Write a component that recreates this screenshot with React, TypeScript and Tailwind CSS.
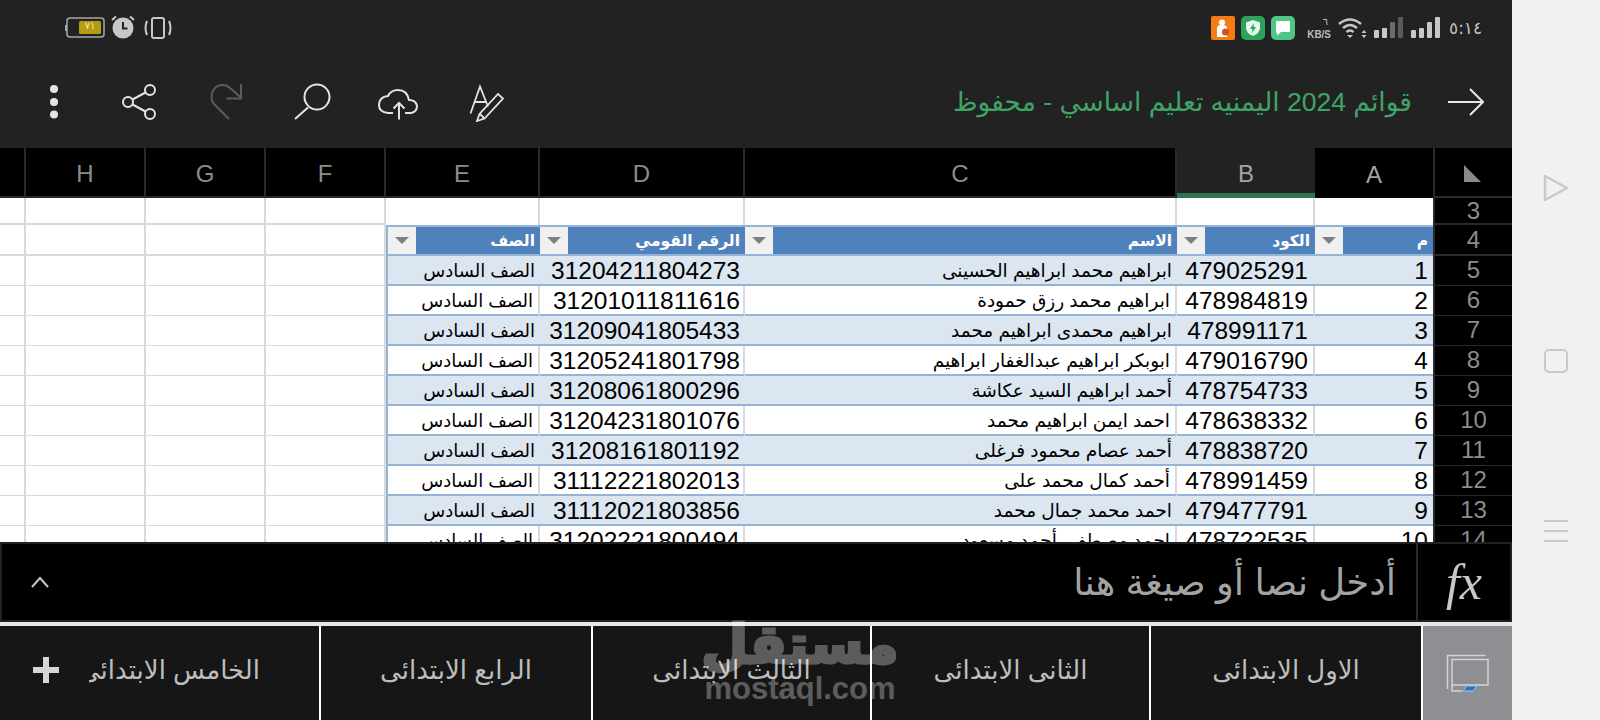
const rows = [
  { no: "1", code: "479025291", name: "ابراهيم محمد ابراهيم الحسينى", id: "31204211804273" },
  { no: "2", code: "478984819", name: "ابراهيم محمد رزق حمودة", id: "31201011811616" },
  { no: "3", code: "478991171", name: "ابراهيم محمدى ابراهيم محمد", id: "31209041805433" },
  { no: "4", code: "479016790", name: "ابوبكر ابراهيم عبدالغفار ابراهيم", id: "31205241801798" },
  { no: "5", code: "478754733", name: "أحمد ابراهيم السيد عكاشة", id: "31208061800296" },
  { no: "6", code: "478638332", name: "احمد ايمن ابراهيم محمد", id: "31204231801076" },
  { no: "7", code: "478838720", name: "أحمد عصام محمود فرغلى", id: "31208161801192" },
  { no: "8", code: "478991459", name: "أحمد كمال محمد على", id: "31112221802013" },
  { no: "9", code: "479477791", name: "احمد محمد جمال محمد", id: "31112021803856" },
  { no: "10", code: "478722535", name: "احمد مصطفى أحمد مسعود", id: "31202221800494" },
];

const gridCols = "grid grid-cols-[26px_120px_120px_120px_154px_205px_432px_138px_118px_79px] leading-none";
const emptyCell = "border-r-2 border-b-2 border-[#d9d9d9] bg-white";
const rowHead = "flex items-center justify-center border-b-2 border-l-2 border-[#2a2a2a] bg-black text-[24px] text-[#8c8c8c]";

function EmptyCells() {
  return (
    <>
      <div className={emptyCell} />
      <div className={emptyCell} />
      <div className={emptyCell} />
      <div className={emptyCell} />
    </>
  );
}

function HeaderCell({ label, pad }: { label: string; pad: string }) {
  return (
    <div className={`flex items-center border-y-2 border-[#95b3d7] bg-[#4f81bd] ${pad}`}>
      <div className="flex h-full w-[28px] shrink-0 items-center justify-center bg-[#f0f0f0]">
        <div className="h-0 w-0 border-x-[7px] border-t-[7px] border-x-transparent border-t-[#7f7f7f]" />
      </div>
      <div dir="rtl" className="flex-1 pr-[5px] text-right text-[15.5px] leading-none font-bold whitespace-nowrap text-white">
        {label}
      </div>
    </div>
  );
}

function StatusBar() {
  return (
    <div className="flex h-[56px] items-center pr-[30px] pl-[65px] text-[#c4c4c4]">
      <svg width="108" height="28" viewBox="65 14 108 28" className="shrink-0">
        <rect x="67" y="18" width="37" height="19" rx="3" fill="none" stroke="#a8a8a8" strokeWidth="1.5" />
        <rect x="65" y="25" width="2" height="6" fill="#a8a8a8" />
        <rect x="79" y="21" width="22" height="13" rx="1.5" fill="#b59c13" />
        <circle cx="123" cy="28" r="10.5" fill="#c8c8c8" />
        <path d="M123 22v6.5h4.5" fill="none" stroke="#222" strokeWidth="2" />
        <path d="M112 20l4-3.5M134 20l-4-3.5" stroke="#c8c8c8" strokeWidth="2" />
        <rect x="152" y="18" width="12" height="20" rx="2" fill="none" stroke="#c8c8c8" strokeWidth="2" />
        <path d="M147 21q-3 7 0 14M169 21q3 7 0 14" fill="none" stroke="#c8c8c8" strokeWidth="2" />
      </svg>
      <span className="absolute left-[79px] top-[19px] w-[22px] text-center font-['DejaVu_Sans',sans-serif] text-[10px] leading-[13px] text-[#f4e9a8]">٧١</span>
      <div className="ml-auto flex items-center">
        <div className="flex h-[24px] w-[24px] items-center justify-center rounded-[2px] bg-[#f57c14]">
          <svg width="16" height="20" viewBox="0 0 16 20">
            <circle cx="7" cy="4.5" r="3" fill="#fff" />
            <path d="M2 19V10q0-3 5-3t5 3v9z" fill="#fff" />
            <circle cx="10.5" cy="14" r="3.5" fill="#c9561a" />
          </svg>
        </div>
        <div className="ml-[6px] flex h-[24px] w-[24px] items-center justify-center rounded-[5px] bg-[#2fa25a]">
          <svg width="16" height="18" viewBox="0 0 16 18">
            <path d="M8 1l7 2.5V9q0 5-7 8-7-3-7-8V3.5z" fill="#e6f6ec" />
            <path d="M9 4L5 10h2.5L7 14l4-6H8.5z" fill="#2fa25a" />
          </svg>
        </div>
        <div className="ml-[6px] flex h-[24px] w-[24px] items-center justify-center rounded-[5px] bg-[#4fc683]">
          <svg width="16" height="16" viewBox="0 0 16 16">
            <path d="M2 1h12q1 0 1 1v9q0 1-1 1H6l-4 3.5V13H2q-1 0-1-1V2q0-1 1-1z" fill="#fff" />
          </svg>
        </div>
        <div className="ml-[9px] flex w-[28px] flex-col items-end font-['Liberation_Sans',sans-serif] text-[11px] leading-none font-bold text-[#bdbdbd]">
          <span className="mr-[4px] font-['DejaVu_Sans',sans-serif] text-[10px] font-normal">٦</span>
          <span className="mt-[2px] scale-x-90 whitespace-nowrap">KB/S</span>
        </div>
        <svg width="30" height="22" viewBox="0 0 30 22" className="ml-[5px]">
          <path d="M2 7q11-9 22 0M6 11q7-6 14 0M9.5 15q3.5-3 7 0" fill="none" stroke="#c8c8c8" strokeWidth="2.4" />
          <path d="M13 21l-3-3h6z" fill="#c8c8c8" />
          <path d="M27 13l-2.500 3h5zM27 21l-2.500-3h5z" fill="#c8c8c8" />
        </svg>
        <svg width="29" height="26" viewBox="0 0 29 26" className="ml-[7px]">
          <rect x="0" y="15" width="5" height="8" rx="1" fill="#c8c8c8" />
          <rect x="8" y="13" width="5" height="10" rx="1" fill="#c8c8c8" />
          <rect x="16" y="7" width="5" height="16" rx="1" fill="#6b6b6b" />
          <rect x="24" y="2" width="5" height="21" rx="1" fill="#5a5a5a" />
        </svg>
        <svg width="29" height="26" viewBox="0 0 29 26" className="ml-[8px]">
          <rect x="0" y="15" width="5" height="8" rx="1" fill="#c8c8c8" />
          <rect x="8" y="13" width="5" height="10" rx="1" fill="#c8c8c8" />
          <rect x="16" y="7" width="5" height="16" rx="1" fill="#c8c8c8" />
          <rect x="24" y="2" width="5" height="21" rx="1" fill="#c8c8c8" />
        </svg>
        <span className="ml-[9px] w-[33px] text-center font-['DejaVu_Sans',sans-serif] text-[17px] leading-none text-[#c4c4c4]">٥:١٤</span>
      </div>
    </div>
  );
}

function Toolbar() {
  return (
    <div className="flex h-[92px] items-center pr-[28px] pl-[48px]">
      <svg width="12" height="40" viewBox="48 82 12 40" className="shrink-0">
        <circle cx="54" cy="89" r="4" fill="#e4e4e4" />
        <circle cx="54" cy="102" r="4" fill="#e4e4e4" />
        <circle cx="54" cy="114.500" r="4" fill="#e4e4e4" />
      </svg>
      <svg width="38" height="40" viewBox="120 82 38 40" className="ml-[60px] shrink-0" fill="none" stroke="#e4e4e4" strokeWidth="2">
        <circle cx="150" cy="90" r="5" />
        <circle cx="128" cy="102" r="5" />
        <circle cx="150" cy="114" r="5" />
        <path d="M132.500 99.500l13-7M132.500 104.500l13 7" />
      </svg>
      <svg width="37" height="40" viewBox="208 82 37 40" className="ml-[50px] shrink-0" fill="none" stroke="#5c5c5c" strokeWidth="2">
        <path d="M229 119l-15-15q-4-5-1.500-12 3-7 9.500-7 5 0 8 3l11 9.500" />
        <path d="M241 84v14.500h-14.500" />
      </svg>
      <svg width="39" height="40" viewBox="293 82 39 40" className="ml-[48px] shrink-0" fill="none" stroke="#e4e4e4" strokeWidth="2">
        <circle cx="317" cy="97" r="12.500" />
        <path d="M308 107.500l-13 11.500" />
      </svg>
      <svg width="44" height="40" viewBox="376 82 44 40" className="ml-[44px] shrink-0" fill="none" stroke="#e4e4e4" strokeWidth="2">
        <path d="M393 113h-5q-9-1-9-8 0-8 9-9 3-6 10-6 9 0 11 10 7 0 8 6 0 6-6 7h-6" />
        <path d="M399 119.500v-16M393.500 108.500l5.500-5.500 5.500 5.500" />
      </svg>
      <svg width="38" height="40" viewBox="468 82 38 40" className="ml-[48px] shrink-0" fill="none" stroke="#e4e4e4" strokeWidth="1.800">
        <path d="M470.500 113.500l9.500-27 8 20M475 102h11" />
        <path d="M477 121l2.500-7 18.500-20 5 4.500-18.500 20z" />
        <path d="M480 114l4 4" />
      </svg>
      <div dir="rtl" className="ml-auto whitespace-nowrap font-['Liberation_Sans','DejaVu_Sans',sans-serif] text-[26.500px] leading-none text-[#3fa566]">
        قوائم 2024 اليمنيه تعليم اساسي - محفوظ
      </div>
      <svg width="36" height="28" viewBox="0 0 36 28" className="ml-[36px] shrink-0" fill="none" stroke="#e8e8e8" strokeWidth="2">
        <path d="M0 14h35M22 1l13 13-13 13" />
      </svg>
    </div>
  );
}

function ColumnHeaders() {
  const labels = ["", "H", "G", "F", "E", "D", "C"];
  return (
    <div className={`${gridCols} h-[50px] bg-black text-[24px] text-[#8c8c8c]`}>
      {labels.map((label) => (
        <div key={label} className="flex items-center justify-center border-r-2 border-b-[2px] border-[#2a2a2a] pt-[4px]">
          {label}
        </div>
      ))}
      <div className="flex items-center justify-center border-b-[5px] border-[#2e7450] bg-[#222222] pt-[6px] text-[#a3a3a3]">B</div>
      <div className="flex items-center justify-center pt-[4px] text-[#a3a3a3]">A</div>
      <div className="flex items-center justify-center border-b-2 border-l-2 border-[#2a2a2a]">
        <div className="mt-[2px] ml-[-2px] h-0 w-0 border-r-[17px] border-b-[17px] border-r-transparent border-b-[#8a8a8a]" />
      </div>
    </div>
  );
}

function Sheet() {
  return (
    <div className="h-[344px] overflow-hidden">
      <div className={`${gridCols} h-[27px]`}>
        <EmptyCells />
        <div className="border-r-2 border-[#d9d9d9] bg-white" />
        <div className="border-r-2 border-[#d9d9d9] bg-white" />
        <div className="border-r-2 border-[#d9d9d9] bg-white" />
        <div className="border-r-2 border-[#d9d9d9] bg-white" />
        <div className="bg-white" />
        <div className={rowHead}>3</div>
      </div>
      <div className={`${gridCols} h-[31px]`}>
        <EmptyCells />
        <HeaderCell label="الصف" pad="border-l-2" />
        <HeaderCell label="الرقم القومي" pad="" />
        <HeaderCell label="الاسم" pad="" />
        <HeaderCell label="الكود" pad="" />
        <HeaderCell label="م" pad="" />
        <div className={rowHead}>4</div>
      </div>
      {rows.map((row, i) => {
        const striped = i % 2 === 0;
        const cell = `flex items-center border-b-[3px] border-b-[#95b3d7] pt-[3px] whitespace-nowrap text-black ${striped ? "bg-[#dce6f1]" : "bg-white"}`;
        const line = striped ? "pr-[5px]" : "border-r-2 border-r-[#d9d9d9] pr-[3px]";
        return (
          <div key={row.no} className={`${gridCols} h-[30px]`}>
            <EmptyCells />
            <div dir="rtl" className={`${cell} border-l-2 border-l-[#95b3d7] pr-[5px] text-[18px] ${striped ? "" : "border-r-2 border-r-[#d9d9d9]"}`}>الصف السادس</div>
            <div className={`${cell} ${line} justify-end text-[24.500px]`}>{row.id}</div>
            <div dir="rtl" className={`${cell} pr-[5px] text-[18.500px] ${striped ? "" : "border-r-2 border-r-[#d9d9d9]"}`}>{row.name}</div>
            <div className={`${cell} justify-end text-[24.500px] ${striped ? "pr-[7px]" : "border-r-2 border-r-[#d9d9d9] pr-[5px]"}`}>{row.code}</div>
            <div className={`${cell} justify-end pr-[5px] text-[24.500px]`}>{row.no}</div>
            <div className={rowHead}>{5 + i}</div>
          </div>
        );
      })}
    </div>
  );
}

function FormulaBar() {
  return (
    <div className="flex h-[80px] items-center border-2 border-[#222222] bg-black">
      <svg width="20" height="12" viewBox="0 0 20 12" className="ml-[28px] shrink-0" fill="none" stroke="#c4c4c4" strokeWidth="2">
        <path d="M2 11l8-9 8 9" />
      </svg>
      <div dir="rtl" className="ml-auto whitespace-nowrap font-['Liberation_Sans','DejaVu_Sans',sans-serif] text-[37px] leading-none text-[#a3a3a3]">
        أدخل نصا أو صيغة هنا
      </div>
      <div className="ml-[20px] flex h-full w-[94px] items-center justify-center border-l-2 border-[#2a2a2a] font-['Liberation_Serif',serif] text-[50px] leading-none text-[#c8c8c8] italic">
        fx
      </div>
    </div>
  );
}

function Tab({ label, width }: { label: string; width: string }) {
  return (
    <div dir="rtl" className={`flex h-full items-center justify-center border-l-2 border-white bg-[#161616] pb-[6px] text-[26px] leading-none whitespace-nowrap text-[#bdbdbd] ${width}`}>
      {label}
    </div>
  );
}

function Tabs() {
  return (
    <div className="relative flex h-[94px] font-['Liberation_Sans','DejaVu_Sans',sans-serif]">
      <div className="flex h-full w-[319px] items-center bg-[#161616] pb-[6px]">
        <svg width="26" height="26" viewBox="0 0 26 26" className="ml-[33px] shrink-0">
          <path d="M10 0h6v10h10v6H16v10h-6V16H0v-6h10z" fill="#d6d6d6" />
        </svg>
        <div dir="rtl" className="ml-[30px] w-[171px] overflow-hidden text-[26px] leading-[34px] whitespace-nowrap text-[#bdbdbd]">
          الخامس الابتدائى
        </div>
      </div>
      <Tab label="الرابع الابتدائى" width="w-[272px]" />
      <Tab label="الثالث الابتدائى" width="w-[279px]" />
      <Tab label="الثانى الابتدائى" width="w-[279px]" />
      <Tab label="الاول الابتدائى" width="w-[272px]" />
      <div className="flex h-full w-[91px] items-center justify-center border-l-2 border-white bg-[#8f8e92]">
        <svg width="44" height="38" viewBox="1446 653 44 38" fill="none" stroke="#d4d4d4" strokeWidth="1.500">
          <path d="M1447.500 688v-33.500h38" />
          <rect x="1452" y="658.500" width="36" height="25.500" />
          <path d="M1452 684v6h10" />
          <path d="M1463 690l4-5h10l-4 5z" fill="#2a72bd" stroke="#9cc7ee" strokeWidth="1" />
        </svg>
      </div>
      <div className="pointer-events-none absolute top-[-18px] left-[700px] flex w-[200px] flex-col items-center text-white opacity-30">
        <span dir="rtl" className="text-[54px] leading-[72px] font-bold [-webkit-text-stroke:3px_white]">مستقل</span>
        <span className="mt-[-8px] font-['Liberation_Sans',sans-serif] text-[31px] leading-[34px] font-bold">mostaql.com</span>
      </div>
    </div>
  );
}

export default function App() {
  return (
    <div className="flex h-[720px] w-[1600px] overflow-hidden bg-[#f1f1f1] font-['Liberation_Sans','DejaVu_Sans',sans-serif]">
      <main className="flex w-[1512px] shrink-0 flex-col">
        <header className="relative bg-[#222222]">
          <StatusBar />
          <Toolbar />
        </header>
        <ColumnHeaders />
        <Sheet />
        <FormulaBar />
        <div className="h-[4px] bg-[#e6e6e6]" />
        <Tabs />
      </main>
      <aside className="flex flex-1 flex-col items-center justify-between pt-[174px] pb-[178px]">
        <svg width="26" height="28" viewBox="0 0 26 28" fill="none" stroke="#c9c9c9" strokeWidth="2.500" strokeLinejoin="round">
          <path d="M2 2l22 12L2 26z" />
        </svg>
        <div className="h-[24px] w-[24px] rounded-[5px] border-2 border-[#c9c9c9]" />
        <div className="flex w-[24px] flex-col gap-[8px]">
          <div className="h-[2px] bg-[#c9c9c9]" />
          <div className="h-[2px] bg-[#c9c9c9]" />
          <div className="h-[2px] bg-[#c9c9c9]" />
        </div>
      </aside>
    </div>
  );
}
